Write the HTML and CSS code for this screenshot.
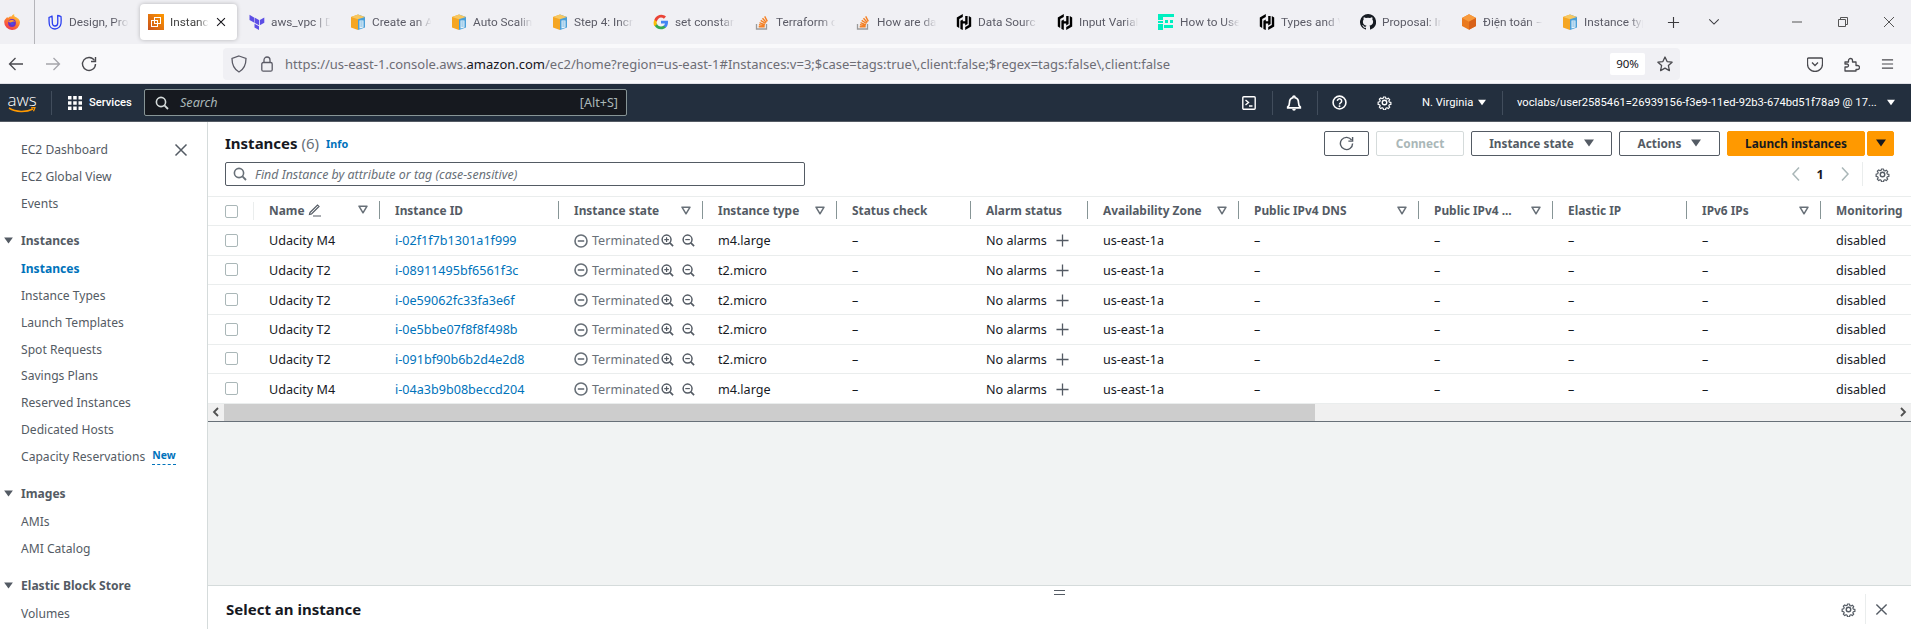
FILE: index.html
```html
<!DOCTYPE html>
<html lang="en">
<head>
<meta charset="utf-8">
<title>Instances | EC2</title>
<link rel="stylesheet" href="styles.css">
</head>
<body>
<svg class="defs" width="0" height="0" aria-hidden="true">
  <defs>
    <linearGradient id="ffg" x1="0.8" y1="0" x2="0.2" y2="1"><stop offset="0" stop-color="#ffd23f"/><stop offset=".5" stop-color="#ff7a2e"/><stop offset="1" stop-color="#f0334f"/></linearGradient>
    <linearGradient id="ecg" x1="0" y1="1" x2="1" y2="0"><stop offset="0" stop-color="#c8511b"/><stop offset="1" stop-color="#ff9900"/></linearGradient>
    <symbol id="i-book" viewBox="0 0 16 16"><path d="M1 3l7-2.500V16l-7-2.500z" fill="#f5a623"/><path d="M8 .5L15 3v10.500L8 16z" fill="#4a9fd8"/><path d="M8 .5L15 3 8 5.200 1 3z" fill="#f7c75f"/><path d="M9.500 6.500h4v7l-4 1z" fill="#e8f3fa"/><path d="M10.300 8h2.400M10.300 10h2.400M10.300 12h2.400" stroke="#4a9fd8" stroke-width=".8"/></symbol>
    <symbol id="i-hashi" viewBox="0 0 16 16"><path d="M6.800 0L.8 3.500v9L3.200 14V5l3.600-2.100zM9.200 2v5.300H6.800V5.400L4.400 6.800V15l2.400 1V9.500h2.400v1.900l2.400-1.400V2zM9.200 16l6-3.500v-9L12.800 2v9l-3.600 2.100z" fill="#000"/></symbol>
    <symbol id="i-so" viewBox="0 0 16 16"><path d="M2.500 10v5h10v-5" fill="none" stroke="#9a9a9a" stroke-width="1.300"/><path d="M4.700 12.800h6M4.900 10.800l5.800.9M5.500 8.600l5.400 2.200M6.700 6.300l4.800 3.200M8.500 4.200l3.800 4.300M10.700 2.400l2.600 5" stroke="#f48024" stroke-width="1.400" fill="none"/></symbol>
    <symbol id="i-gear" viewBox="0 0 16 16"><path d="M6.700 1h2.600l.4 2 1.400.6 1.700-1.100 1.800 1.800-1.100 1.700.6 1.400 2 .4v2.600l-2 .4-.6 1.400 1.100 1.700-1.800 1.800-1.700-1.100-1.400.6-.4 2H6.700l-.4-2-1.400-.6-1.700 1.100-1.800-1.800 1.100-1.700-.6-1.400-2-.4V7.400l2-.4.6-1.400-1.100-1.700 1.800-1.800 1.700 1.100 1.400-.6z" fill="none" stroke="currentColor" stroke-width="1.500" stroke-linejoin="round" transform="translate(1.300 1.300) scale(.84)"/><circle cx="8" cy="8" r="2.400" fill="none" stroke="currentColor" stroke-width="1.500"/></symbol>
    <symbol id="i-caret" viewBox="0 0 10 8"><path d="M0 .5h10L5 7.500z" fill="currentColor"/></symbol>
    <symbol id="i-filter" viewBox="0 0 10 9"><path d="M1 1.200h8L5 7.800z" fill="none" stroke="currentColor" stroke-width="1.500" stroke-linejoin="round"/></symbol>
    <symbol id="i-x" viewBox="0 0 14 14"><path d="M1.500 1.500l11 11M12.500 1.500l-11 11" stroke="currentColor" stroke-width="1.500" fill="none"/></symbol>
    <symbol id="i-search" viewBox="0 0 14 14"><circle cx="6" cy="6" r="4.600" fill="none" stroke="currentColor" stroke-width="1.600"/><path d="M9.400 9.400L13 13" stroke="currentColor" stroke-width="1.800"/></symbol>
    <symbol id="i-term" viewBox="0 0 14 14"><circle cx="7" cy="7" r="6" fill="none" stroke="#687078" stroke-width="1.600"/><path d="M3.800 7h6.400" stroke="#687078" stroke-width="1.600"/></symbol>
    <symbol id="i-zin" viewBox="0 0 14 14"><circle cx="6" cy="6" r="4.800" fill="none" stroke="#545b64" stroke-width="1.600"/><path d="M9.500 9.500L13 13" stroke="#545b64" stroke-width="1.800"/><path d="M3.500 6h5M6 3.500v5" stroke="#545b64" stroke-width="1.300"/></symbol>
    <symbol id="i-zout" viewBox="0 0 14 14"><circle cx="6" cy="6" r="4.800" fill="none" stroke="#545b64" stroke-width="1.600"/><path d="M9.500 9.500L13 13" stroke="#545b64" stroke-width="1.800"/><path d="M3.500 6h5" stroke="#545b64" stroke-width="1.300"/></symbol>
    <symbol id="i-plus" viewBox="0 0 14 14"><path d="M7 .5v13M.5 7h13" stroke="#545b64" stroke-width="1.400"/></symbol>
  </defs>
</svg>

<div class="app">
  <header class="tabs">
    <svg class="ff" viewBox="0 0 16 16"><path d="M2 4.500c.5-.8 1-1.300 1.600-1.600-.1.500 0 .9.300 1.200C5 2.600 6.500 2.300 7.500 2.500 8 1.500 9 .6 10.300 0c-.3 1-.2 1.800.3 2.500 3 1 5.400 3.300 5.400 6A7.800 7.800 0 0 1 8 16 8 8 0 0 1 .2 8c0-1.400.7-2.600 1.800-3.500z" fill="url(#ffg)"/><circle cx="8" cy="9" r="3.900" fill="#6d2fc4"/><path d="M4.200 7.500c1.800-1.800 5.300-2.200 7.300.3-1.700-.8-3.200-.3-4 .6-1.300.3-2.400 0-3.300-.9z" fill="#ff9a2e"/><circle cx="8.300" cy="9.600" r="1.700" fill="#4a4fe0"/></svg>
    <div class="tabsep"></div>
    <div class="tab">
      <svg class="fav" viewBox="0 0 16 16"><path d="M2 3.500c.2 0 1.800-1 3-1.500.3 3.200.2 5.500.4 7.500.2 1.700 1.300 2.500 2.600 2.500s2.500-1 2.700-2.700c.2-2.500 0-5 0-7.800 1.200.3 2.300.6 3.300 1 .3 2.600.2 4.800 0 7-.3 3-3 5.500-6 5.500S2.500 12.800 2.300 10c-.2-2.200-.3-4.500-.3-6.500z" fill="none" stroke="#2b3ff0" stroke-width="1.300" stroke-linejoin="round"/></svg>
      <span class="tab-t">Design, Pro</span>
    </div>
    <div class="tab tab-on">
      <svg class="fav" viewBox="0 0 16 16"><rect width="16" height="16" fill="url(#ecg)"/><rect x="6.500" y="3.500" width="6" height="6" fill="none" stroke="#fff" stroke-width="1"/><rect x="3.500" y="6.500" width="6" height="6" fill="none" stroke="#fff" stroke-width="1"/></svg>
      <span class="tab-t">Instance</span>
      <svg class="tab-x" viewBox="0 0 14 14"><use href="#i-x"/></svg>
    </div>
    <div class="tab">
      <svg class="fav" viewBox="0 0 16 16"><path d="M5.500 3.500l4.500 2.600v5.200L5.500 8.700zM10.800 6.100l4.500-2.600v5.200l-4.500 2.600zM.5.800L5 3.400v5.200L.5 6zM5.500 9.700l4.500 2.600v3.700L5.500 13.400z" fill="#5c4ee5"/></svg>
      <span class="tab-t">aws_vpc | D</span>
    </div>
    <div class="tab"><svg class="fav"><use href="#i-book"/></svg><span class="tab-t">Create an A</span></div>
    <div class="tab"><svg class="fav"><use href="#i-book"/></svg><span class="tab-t">Auto Scalin</span></div>
    <div class="tab"><svg class="fav"><use href="#i-book"/></svg><span class="tab-t">Step 4: Incr</span></div>
    <div class="tab">
      <svg class="fav" viewBox="0 0 16 16"><path d="M15 8.200c0-.6 0-1-.1-1.500H8v2.900h4a3.400 3.400 0 0 1-1.500 2.200v1.800h2.400c1.400-1.300 2.100-3.200 2.100-5.400z" fill="#4285f4"/><path d="M8 15.300c2 0 3.700-.7 4.900-1.800l-2.400-1.800c-.7.400-1.500.7-2.500.7-1.900 0-3.600-1.300-4.200-3H1.400v1.900A7.300 7.300 0 0 0 8 15.300z" fill="#34a853"/><path d="M3.800 10.400a4.400 4.400 0 0 1 0-2.800V5.700H1.400a7.300 7.300 0 0 0 0 6.600z" fill="#fbbc05"/><path d="M8 3.600c1.100 0 2.100.4 2.900 1.100l2.100-2.100A7.300 7.300 0 0 0 1.400 5.700l2.400 1.900c.6-1.800 2.300-4 4.200-4z" fill="#ea4335"/></svg>
      <span class="tab-t">set constar</span>
    </div>
    <div class="tab"><svg class="fav"><use href="#i-so"/></svg><span class="tab-t">Terraform d</span></div>
    <div class="tab"><svg class="fav"><use href="#i-so"/></svg><span class="tab-t">How are da</span></div>
    <div class="tab"><svg class="fav"><use href="#i-hashi"/></svg><span class="tab-t">Data Sourc</span></div>
    <div class="tab"><svg class="fav"><use href="#i-hashi"/></svg><span class="tab-t">Input Varial</span></div>
    <div class="tab">
      <svg class="fav" viewBox="0 0 16 16"><path d="M0 0h16v3H5v3H0zM0 7h5v2H0zM0 10h5v6H0zM7 6h3v3H7zM12 6h3v3h-3zM6 11h9v3H6z" fill="#00efc0"/></svg>
      <span class="tab-t">How to Use</span>
    </div>
    <div class="tab"><svg class="fav"><use href="#i-hashi"/></svg><span class="tab-t">Types and V</span></div>
    <div class="tab">
      <svg class="fav" viewBox="0 0 16 16"><path d="M8 0a8 8 0 0 0-2.500 15.600c.4.100.5-.2.500-.4v-1.400c-2.200.5-2.700-1-2.700-1-.4-.9-.9-1.200-.9-1.200-.7-.5.100-.5.100-.5.800.1 1.200.8 1.200.8.700 1.200 1.900.9 2.300.7.100-.5.300-.9.500-1.100-1.800-.2-3.600-.9-3.600-4 0-.9.300-1.600.8-2.100-.1-.2-.4-1 .1-2.100 0 0 .7-.2 2.200.8a7.600 7.600 0 0 1 4 0c1.500-1 2.200-.8 2.200-.8.500 1.100.2 1.900.1 2.100.5.600.8 1.300.8 2.100 0 3.100-1.900 3.800-3.700 4 .3.300.6.800.6 1.500v2.200c0 .2.100.5.600.4A8 8 0 0 0 8 0z" fill="#161b22"/></svg>
      <span class="tab-t">Proposal: Ir</span>
    </div>
    <div class="tab">
      <svg class="fav" viewBox="0 0 16 16"><path d="M8 .3l7 3.700v8l-7 3.700L1 12V4z" fill="#ea7a1f"/><path d="M8 .3l7 3.700-7 3.800L1 4z" fill="#f89a3c"/><path d="M8 7.800l7-3.800v8l-7 3.700z" fill="#d8621a"/></svg>
      <span class="tab-t">Điện toán –</span>
    </div>
    <div class="tab"><svg class="fav"><use href="#i-book"/></svg><span class="tab-t">Instance typ</span></div>
    <svg class="t-plus" viewBox="0 0 14 14"><path d="M7 1v12M1 7h12" stroke="#3a3a3e" stroke-width="1.200"/></svg>
    <svg class="t-chev" viewBox="0 0 14 8"><path d="M1.500 1L7 6.500 12.500 1" fill="none" stroke="#3a3a3e" stroke-width="1.200"/></svg>
    <div class="winctl">
      <svg class="wc" viewBox="0 0 12 12"><path d="M1 6h10" stroke="#555" stroke-width="1"/></svg>
      <svg class="wc" viewBox="0 0 12 12"><path d="M1.500 3.500h7v7h-7zM3.500 3.500v-2h7v7h-2" fill="none" stroke="#555" stroke-width="1"/></svg>
      <svg class="wc" viewBox="0 0 12 12"><path d="M1 1l10 10M11 1L1 11" stroke="#555" stroke-width="1"/></svg>
    </div>
  </header>

  <div class="toolbar">
    <svg class="nav-ic" viewBox="0 0 16 16"><path d="M15 8H1.500M7.500 2l-6 6 6 6" fill="none" stroke="#4a4a4f" stroke-width="1.300"/></svg>
    <svg class="nav-ic nav-dim" viewBox="0 0 16 16"><path d="M1 8h13.500M8.500 2l6 6-6 6" fill="none" stroke="#a5a5ab" stroke-width="1.300"/></svg>
    <svg class="nav-ic" viewBox="0 0 16 16"><path d="M13.500 4.500A6.500 6.500 0 1 0 14.500 8" fill="none" stroke="#4a4a4f" stroke-width="1.400"/><path d="M14.500 1v4.500H10" fill="none" stroke="#4a4a4f" stroke-width="1.400"/></svg>
    <div class="urlbar">
      <svg class="u-shield" viewBox="0 0 16 18"><path d="M8 1l7 2.500c0 6-1.500 10.500-7 13.500C2.500 14 1 9.500 1 3.500z" fill="none" stroke="#5b5b66" stroke-width="1.300"/></svg>
      <svg class="u-lock" viewBox="0 0 12 16"><rect x=".8" y="6.500" width="10.400" height="8.700" rx="1.500" fill="none" stroke="#5b5b66" stroke-width="1.300"/><path d="M3 6.500V4a3 3 0 0 1 6 0v2.500" fill="none" stroke="#5b5b66" stroke-width="1.300"/></svg>
      <span class="url">https://us-east-1.console.aws.<b>amazon.com</b>/ec2/home?region=us-east-1#Instances:v=3;$case=tags:true\,client:false;$regex=tags:false\,client:false</span>
      <span class="zoomlvl">90%</span>
      <svg class="u-star" viewBox="0 0 16 16"><path d="M8 1l2.100 4.600 5 .6-3.700 3.400 1 5L8 12.100l-4.400 2.500 1-5L.9 6.200l5-.6z" fill="none" stroke="#4a4a4f" stroke-width="1.300" stroke-linejoin="round"/></svg>
    </div>
    <svg class="tb-r tb-pocket" viewBox="0 0 16 16"><path d="M1.500 2h13a1 1 0 0 1 1 1v5a7.500 7.500 0 0 1-15 0V3a1 1 0 0 1 1-1z" fill="none" stroke="#4a4a4f" stroke-width="1.300"/><path d="M5 6.500L8 9.500l3-3" fill="none" stroke="#4a4a4f" stroke-width="1.300"/></svg>
    <svg class="tb-r tb-ext" viewBox="0 0 16 16"><path d="M1 6h3.500V4.500a2 2 0 0 1 4 0V6H12v3.500h1.500a2 2 0 0 1 0 4H12V15H1v-4h2a1.500 1.500 0 0 0 0-3H1z" fill="none" stroke="#4a4a4f" stroke-width="1.300" stroke-linejoin="round"/></svg>
    <svg class="tb-r tb-menu" viewBox="0 0 14 12"><path d="M1 1.500h12M1 6h12M1 10.500h12" stroke="#4a4a4f" stroke-width="1.200"/></svg>
  </div>

  <nav class="awsnav">
    <div class="logo"><span class="logo-t">aws</span><svg class="smile" viewBox="0 0 28 6"><path d="M1 1c7 4.500 17 4.500 24 1" fill="none" stroke="#f90" stroke-width="1.500"/><path d="M23 .8l4-.3-1.500 3.700" fill="none" stroke="#f90" stroke-width="1.200"/></svg></div>
    <div class="vsep vsep-logo"></div>
    <svg class="grid9" viewBox="0 0 14 14"><path d="M0 0h3.500v3.500H0zM5.200 0h3.500v3.500H5.200zM10.500 0H14v3.500h-3.500zM0 5.200h3.500v3.500H0zM5.200 5.200h3.500v3.500H5.200zM10.500 5.200H14v3.500h-3.500zM0 10.500h3.500V14H0zM5.200 10.500h3.500V14H5.200zM10.500 10.500H14V14h-3.500z" fill="#fff"/></svg>
    <span class="services">Services</span>
    <div class="awssearch">
      <svg class="as-ic"><use href="#i-search"/></svg>
      <span class="as-t">Search</span>
      <span class="as-k">[Alt+S]</span>
    </div>
    <svg class="n-shell" viewBox="0 0 14 14"><rect x=".8" y=".8" width="12.400" height="12.400" rx="1" fill="none" stroke="#fff" stroke-width="1.400"/><path d="M3.500 4l3 2.500-3 2.500M7 10h3.500" fill="none" stroke="#fff" stroke-width="1.400"/></svg>
    <div class="vsep vsep-a"></div>
    <svg class="n-bell" viewBox="0 0 16 16"><path d="M8 1a1 1 0 0 1 1 1v.600c2.300.5 3.500 2.400 3.500 4.900 0 2.500.5 3.500 1.800 4.500v.8H1.700V12c1.300-1 1.800-2 1.800-4.500 0-2.500 1.200-4.400 3.500-4.900V2a1 1 0 0 1 1-1z" fill="none" stroke="#fff" stroke-width="1.700"/><path d="M6.200 14h3.600a1.800 1.800 0 0 1-3.600 0z" fill="#fff"/></svg>
    <div class="vsep vsep-b"></div>
    <svg class="n-help" viewBox="0 0 14 14"><circle cx="7" cy="7" r="6" fill="none" stroke="#fff" stroke-width="1.500"/><path d="M5 5.500a2 2 0 1 1 3 1.800c-.7.400-1 .8-1 1.500" fill="none" stroke="#fff" stroke-width="1.400"/><circle cx="7" cy="10.500" r=".9" fill="#fff"/></svg>
    <svg class="n-gear"><use href="#i-gear"/></svg>
    <span class="region">N. Virginia</span>
    <svg class="n-caret"><use href="#i-caret"/></svg>
    <div class="vsep vsep-c"></div>
    <span class="account">voclabs/user2585461=26939156-f3e9-11ed-92b3-674bd51f78a9 @ 17...</span>
    <svg class="n-caret n-caret-end"><use href="#i-caret"/></svg>
  </nav>

  <div class="body">
    <aside class="side">
      <svg class="side-x"><use href="#i-x"/></svg>
      <a class="si">EC2 Dashboard</a>
      <a class="si">EC2 Global View</a>
      <a class="si">Events</a>
      <div class="sh"><svg class="sh-c"><use href="#i-caret"/></svg>Instances</div>
      <a class="si si-on">Instances</a>
      <a class="si">Instance Types</a>
      <a class="si">Launch Templates</a>
      <a class="si">Spot Requests</a>
      <a class="si">Savings Plans</a>
      <a class="si">Reserved Instances</a>
      <a class="si">Dedicated Hosts</a>
      <a class="si">Capacity Reservations <span class="new">New</span></a>
      <div class="sh"><svg class="sh-c"><use href="#i-caret"/></svg>Images</div>
      <a class="si">AMIs</a>
      <a class="si">AMI Catalog</a>
      <div class="sh"><svg class="sh-c"><use href="#i-caret"/></svg>Elastic Block Store</div>
      <a class="si">Volumes</a>
    </aside>

    <main class="main">
      <section class="top">
        <div class="top-l">
          <h1 class="title">Instances <span class="count">(6)</span> <a class="info">Info</a></h1>
          <div class="find">
            <svg class="find-ic"><use href="#i-search"/></svg>
            <span>Find Instance by attribute or tag (case-sensitive)</span>
          </div>
        </div>
        <div class="top-r">
          <div class="btns">
            <button class="btn btn-ref"><svg viewBox="0 0 16 16"><path d="M13.500 4.500A6.500 6.500 0 1 0 14.500 8" fill="none" stroke="#545b64" stroke-width="1.500"/><path d="M14.500 1v4.500H10" fill="none" stroke="#545b64" stroke-width="1.500"/></svg></button>
            <button class="btn btn-off">Connect</button>
            <button class="btn btn-state">Instance state <svg><use href="#i-caret"/></svg></button>
            <button class="btn btn-act">Actions <svg><use href="#i-caret"/></svg></button>
            <button class="btn btn-launch">Launch instances</button>
            <button class="btn btn-drop"><svg><use href="#i-caret"/></svg></button>
          </div>
          <div class="pager">
            <svg class="pg-ch" viewBox="0 0 10 16"><path d="M8 1.500L2 8l6 6.500" fill="none" stroke="#aab7b8" stroke-width="1.500"/></svg>
            <span class="pg-n">1</span>
            <svg class="pg-ch" viewBox="0 0 10 16"><path d="M2 1.500L8 8l-6 6.500" fill="none" stroke="#aab7b8" stroke-width="1.500"/></svg>
            <span class="pg-sep"></span>
            <svg class="pg-gear"><use href="#i-gear"/></svg>
          </div>
        </div>
      </section>

      <section class="table">
        <div class="row row-h">
          <div class="chk"><span class="cb"></span><span class="sep sep-faint"></span></div>
          <div class="th th-name">Name <svg class="pencil" viewBox="0 0 14 14"><path d="M2 9.500L9.500 2l1.500 1.500L3.500 11l-2 .5zM5 13h8" fill="none" stroke="#545b64" stroke-width="1.200"/></svg><svg class="flt"><use href="#i-filter"/></svg><span class="sep"></span></div>
          <div class="th">Instance ID<span class="sep sep-auto"></span></div>
          <div class="th">Instance state<svg class="flt"><use href="#i-filter"/></svg><span class="sep"></span></div>
          <div class="th">Instance type<svg class="flt"><use href="#i-filter"/></svg><span class="sep"></span></div>
          <div class="th">Status check<span class="sep sep-auto"></span></div>
          <div class="th">Alarm status<span class="sep sep-auto"></span></div>
          <div class="th">Availability Zone<svg class="flt"><use href="#i-filter"/></svg><span class="sep"></span></div>
          <div class="th">Public IPv4 DNS<svg class="flt"><use href="#i-filter"/></svg><span class="sep"></span></div>
          <div class="th">Public IPv4 ...<svg class="flt"><use href="#i-filter"/></svg><span class="sep"></span></div>
          <div class="th">Elastic IP<span class="sep sep-auto"></span></div>
          <div class="th">IPv6 IPs<svg class="flt"><use href="#i-filter"/></svg><span class="sep"></span></div>
          <div class="th">Monitoring</div>
        </div>

        <div class="row">
          <div class="chk"><span class="cb"></span></div><div class="td">Udacity M4</div><div class="td"><a class="lnk">i-02f1f7b1301a1f999</a></div>
          <div class="td"><svg class="st"><use href="#i-term"/></svg><span class="stt">Terminated</span><svg class="zi"><use href="#i-zin"/></svg><svg class="zi"><use href="#i-zout"/></svg></div>
          <div class="td">m4.large</div><div class="td">–</div><div class="td">No alarms<svg class="pl"><use href="#i-plus"/></svg></div><div class="td">us-east-1a</div><div class="td">–</div><div class="td">–</div><div class="td">–</div><div class="td">–</div><div class="td">disabled</div>
        </div>
        <div class="row">
          <div class="chk"><span class="cb"></span></div><div class="td">Udacity T2</div><div class="td"><a class="lnk">i-08911495bf6561f3c</a></div>
          <div class="td"><svg class="st"><use href="#i-term"/></svg><span class="stt">Terminated</span><svg class="zi"><use href="#i-zin"/></svg><svg class="zi"><use href="#i-zout"/></svg></div>
          <div class="td">t2.micro</div><div class="td">–</div><div class="td">No alarms<svg class="pl"><use href="#i-plus"/></svg></div><div class="td">us-east-1a</div><div class="td">–</div><div class="td">–</div><div class="td">–</div><div class="td">–</div><div class="td">disabled</div>
        </div>
        <div class="row">
          <div class="chk"><span class="cb"></span></div><div class="td">Udacity T2</div><div class="td"><a class="lnk">i-0e59062fc33fa3e6f</a></div>
          <div class="td"><svg class="st"><use href="#i-term"/></svg><span class="stt">Terminated</span><svg class="zi"><use href="#i-zin"/></svg><svg class="zi"><use href="#i-zout"/></svg></div>
          <div class="td">t2.micro</div><div class="td">–</div><div class="td">No alarms<svg class="pl"><use href="#i-plus"/></svg></div><div class="td">us-east-1a</div><div class="td">–</div><div class="td">–</div><div class="td">–</div><div class="td">–</div><div class="td">disabled</div>
        </div>
        <div class="row">
          <div class="chk"><span class="cb"></span></div><div class="td">Udacity T2</div><div class="td"><a class="lnk">i-0e5bbe07f8f8f498b</a></div>
          <div class="td"><svg class="st"><use href="#i-term"/></svg><span class="stt">Terminated</span><svg class="zi"><use href="#i-zin"/></svg><svg class="zi"><use href="#i-zout"/></svg></div>
          <div class="td">t2.micro</div><div class="td">–</div><div class="td">No alarms<svg class="pl"><use href="#i-plus"/></svg></div><div class="td">us-east-1a</div><div class="td">–</div><div class="td">–</div><div class="td">–</div><div class="td">–</div><div class="td">disabled</div>
        </div>
        <div class="row">
          <div class="chk"><span class="cb"></span></div><div class="td">Udacity T2</div><div class="td"><a class="lnk">i-091bf90b6b2d4e2d8</a></div>
          <div class="td"><svg class="st"><use href="#i-term"/></svg><span class="stt">Terminated</span><svg class="zi"><use href="#i-zin"/></svg><svg class="zi"><use href="#i-zout"/></svg></div>
          <div class="td">t2.micro</div><div class="td">–</div><div class="td">No alarms<svg class="pl"><use href="#i-plus"/></svg></div><div class="td">us-east-1a</div><div class="td">–</div><div class="td">–</div><div class="td">–</div><div class="td">–</div><div class="td">disabled</div>
        </div>
        <div class="row">
          <div class="chk"><span class="cb"></span></div><div class="td">Udacity M4</div><div class="td"><a class="lnk">i-04a3b9b08beccd204</a></div>
          <div class="td"><svg class="st"><use href="#i-term"/></svg><span class="stt">Terminated</span><svg class="zi"><use href="#i-zin"/></svg><svg class="zi"><use href="#i-zout"/></svg></div>
          <div class="td">m4.large</div><div class="td">–</div><div class="td">No alarms<svg class="pl"><use href="#i-plus"/></svg></div><div class="td">us-east-1a</div><div class="td">–</div><div class="td">–</div><div class="td">–</div><div class="td">–</div><div class="td">disabled</div>
        </div>
      </section>

      <div class="hscroll">
        <span class="hs-btn"><svg viewBox="0 0 8 10"><path d="M6 1L2 5l4 4" fill="none" stroke="#505050" stroke-width="1.800"/></svg></span>
        <span class="hs-thumb"></span>
        <span class="hs-btn hs-end"><svg viewBox="0 0 8 10"><path d="M2 1l4 4-4 4" fill="none" stroke="#505050" stroke-width="1.800"/></svg></span>
      </div>

      <div class="gap"></div>

      <section class="detail">
        <span class="detail-t">Select an instance</span>
        <span class="handle"></span>
        <svg class="d-gear"><use href="#i-gear"/></svg>
        <span class="d-sep"></span>
        <svg class="d-x"><use href="#i-x"/></svg>
      </section>
    </main>
  </div>
</div>
</body>
</html>
```

FILE: styles.css
```css
* { box-sizing: border-box; }
html, body { margin: 0; height: 100%; overflow: hidden; }
body { font-family: "Noto Sans", "Open Sans", sans-serif; font-size: 12.6px; color: #16191f; background: #fff; }
.defs { position: absolute; }
a { text-decoration: none; }
button { font: inherit; }
svg { display: block; flex: none; }

.app { width: 1911px; height: 629px; display: flex; flex-direction: column; overflow: hidden; }

/* browser tab strip */
.tabs { height: 44px; flex: none; background: #f0f0f4; display: flex; align-items: center; }
.ff { width: 16px; height: 16px; margin-left: 4px; }
.tabsep { width: 1px; height: 44px; background: #b5b5ba; margin-left: 14px; margin-right: 4px; }
.tab { width: 101px; height: 36px; flex: none; display: flex; align-items: center; padding-left: 8px; gap: 6px; border-radius: 4px; color: #5b5b66; font-family: Roboto, "Noto Sans", sans-serif; font-size: 11.8px; }
.fav { width: 16px; height: 16px; }
.tab-t { width: 62px; white-space: nowrap; -webkit-mask-image: linear-gradient(90deg, #000 72%, transparent 96%); mask-image: linear-gradient(90deg, #000 72%, transparent 96%); }
.tab-on { width: 97px; margin-right: 4px; background: #fff; box-shadow: 0 0 4px rgba(0,0,0,.25); color: #444; }
.tab-on .tab-t { width: 40px; }
.tab-x { width: 10px; height: 10px; color: #15141a; }
.t-plus { width: 13px; height: 13px; margin-left: 12px; }
.t-chev { width: 12px; height: 8px; margin-left: 28px; }
.winctl { margin-left: 71px; display: flex; gap: 34px; }
.wc { width: 12px; height: 12px; }

/* browser toolbar */
.toolbar { height: 40px; flex: none; background: #f9f9fb; display: flex; align-items: center; border-bottom: 1px solid #e0e0e6; }
.nav-ic { width: 16px; height: 16px; margin-left: 8px; margin-right: 13px; }
.nav-dim { margin-left: 8px; }
.nav-ic:first-child { margin-left: 8px; }
.nav-ic:nth-child(3) { margin-left: 7px; margin-right: 0; }
.urlbar { width: 1457px; height: 32px; margin-left: 126px; background: #f0f0f4; border-radius: 4px; display: flex; align-items: center; padding-left: 8px; }
.u-shield { width: 16px; height: 18px; }
.u-lock { width: 12px; height: 16px; margin-left: 14px; }
.url { margin-left: 12px; font-size: 13px; color: #6d6d75; white-space: nowrap; width: 1048px; }
.url b { font-weight: 400; color: #15141a; }
.zoomlvl { margin-left: 277px; width: 35px; height: 22px; background: #fff; border-radius: 2px; display: flex; align-items: center; justify-content: center; font-size: 11.5px; color: #15141a; }
.u-star { width: 16px; height: 16px; margin-left: 12px; }
.tb-r { height: 16px; width: 16px; }
.tb-pocket { margin-left: 127px; }
.tb-ext { margin-left: 21px; }
.tb-menu { margin-left: 21px; width: 13px; height: 12px; }

/* aws nav */
.awsnav { height: 38px; flex: none; background: #232f3e; border-bottom: 1px solid #545b64; color: #fff; display: flex; align-items: center; font-family: Roboto, "Noto Sans", sans-serif; font-size: 11.2px; }
.logo { width: 28px; margin-left: 8px; display: flex; flex-direction: column; align-items: center; }
.logo-t { font-family: "Open Sans", sans-serif; font-size: 17px; line-height: 14px; color: #fff; font-weight: 300; }
.smile { width: 28px; height: 6px; }
.vsep { width: 1px; height: 24px; background: #414d5c; }
.vsep-logo { margin-left: 15px; }
.grid9 { width: 14px; height: 14px; margin-left: 16px; }
.services { margin-left: 7px; font-weight: 500; width: 55px; }
.awssearch { width: 483px; height: 27px; background: #16191f; border: 1px solid #879596; border-radius: 2px; display: flex; align-items: center; padding: 0 8px 0 10px; font-family: "Noto Sans", sans-serif; }
.as-ic { width: 14px; height: 14px; color: #d5dbdb; margin-left: 0; }
.as-t { margin-left: 11px; font-style: italic; color: #aab7b8; font-size: 12.6px; }
.as-k { margin-left: auto; color: #aab7b8; font-size: 12.6px; }
.n-shell { width: 14px; height: 14px; margin-left: 615px; }
.vsep-a { margin-left: 16px; }
.n-bell { width: 16px; height: 16px; margin-left: 13px; }
.vsep-b { margin-left: 15px; }
.n-help { width: 15px; height: 15px; margin-left: 14px; }
.n-gear { width: 15px; height: 15px; margin-left: 30px; color: #fff; }
.region { margin-left: 30px; width: 51px; white-space: nowrap; }
.n-caret { width: 8px; height: 7px; margin-left: 5px; color: #fff; }
.vsep-c { margin-left: 16px; }
.account { margin-left: 14px; width: 366px; white-space: nowrap; }
.n-caret-end { margin-left: 4px; }

.body { flex: 1; display: flex; min-height: 0; }

/* sidebar */
.side { width: 208px; flex: none; background: #fff; border-right: 1px solid #d5dbdb; padding: 14px 0 0 21px; display: flex; flex-direction: column; position: relative; overflow: hidden; color: #545b64; font-size: 12.1px; }
.si { height: 26.9px; flex: none; display: flex; align-items: center; color: #545b64; white-space: nowrap; }
.si-on { color: #0073bb; font-weight: 700; }
.sh { height: 27px; flex: none; margin: 10.300px 0 1px -17px; display: flex; align-items: center; font-weight: 700; color: #545b64; white-space: nowrap; }
.sh-c { width: 9px; height: 7px; margin-right: 8px; color: #545b64; }
.side-x { position: absolute; top: 21px; left: 174px; width: 14px; height: 14px; color: #545b64; }
.new { color: #0073bb; font-weight: 700; font-size: 10.4px; margin-left: 7px; border-bottom: 1px dashed #0073bb; padding-bottom: 2px; }

/* main */
.main { flex: 1; min-width: 0; display: flex; flex-direction: column; background: #f1f3f3; }
.top { background: #fff; padding: 9px 17px 10px 17px; display: flex; justify-content: space-between; flex: none; }
.top-l { display: flex; flex-direction: column; gap: 6px; }
.title { margin: 0; height: 25px; padding-bottom: 2px; display: flex; align-items: center; font-size: 15px; font-weight: 700; color: #16191f; white-space: pre; }
.count { font-weight: 400; color: #687078; }
.info { color: #0073bb; font-size: 10.8px; font-weight: 700; margin-left: 7px; padding-top: 2px; }
.find { width: 580px; height: 24px; border: 1px solid #545b64; border-radius: 2px; display: flex; align-items: center; padding-left: 7px; font-style: italic; font-size: 12.4px; color: #687078; }
.find-ic { width: 14px; height: 14px; margin-right: 8px; color: #687078; }
.top-r { display: flex; flex-direction: column; gap: 6px; align-items: flex-end; }
.btns { display: flex; gap: 7px; height: 25px; }
.btn { height: 25px; border: 1px solid #545b64; border-radius: 2px; background: #fff; color: #545b64; font-size: 11.8px; font-weight: 700; display: flex; align-items: center; justify-content: center; padding: 0 0 2px; }
.btn svg { width: 10px; height: 8px; margin-left: 10px; }
.btn-ref { width: 45px; padding: 0; }
.btn-ref svg { width: 15px; height: 15px; margin: 0; }
.btn-off { width: 88px; border-color: #d5dbdb; color: #aab7b8; }
.btn-state { width: 141px; }
.btn-act { width: 101px; }
.btn-launch { width: 138px; background: #ff9900; border-color: #ff9900; color: #16191f; }
.btn-drop { width: 27px; margin-left: -5px; background: #ff9900; border-color: #ff9900; color: #16191f; }
.btn-drop svg { margin: 0; }
.pager { height: 24px; display: flex; align-items: center; padding-right: 4.500px; }
.pg-ch { width: 10px; height: 16px; }
.pg-n { width: 39px; text-align: center; font-weight: 700; color: #16191f; }
.pg-sep { width: 1px; height: 24px; background: #eaeded; margin: 0 12px; }
.pg-gear { width: 15px; height: 15px; color: #545b64; }

/* table */
.table { flex: none; background: #fff; overflow: hidden; border-top: 1px solid #eaeded; }
.row { display: grid; grid-template-columns: 46px 126px 179px 144px 134px 134px 117px 151px 180px 134px 134px 134px 120px; width: 1733px; height: 29.67px; border-bottom: 1px solid #eaeded; align-items: center; white-space: nowrap; }
.row-h { height: 29px; font-weight: 700; font-size: 11.9px; color: #545b64; }
.chk { display: flex; align-items: center; justify-content: space-between; padding-left: 17px; }
.cb { width: 13px; height: 13px; border: 1px solid #aab7b8; border-radius: 2px; background: #fff; }
.th, .td { display: flex; align-items: center; padding-left: 15px; height: 100%; overflow: hidden; }
.th { padding-bottom: 2px; }
.td { color: #16191f; padding-top: 1px; }
.th-name { padding-bottom: 3px; }
.pencil { width: 14px; height: 14px; margin-left: 4px; }
.flt { width: 10px; height: 9px; margin-left: auto; margin-right: 11px; color: #687078; }
.sep { width: 1px; height: 18px; background: #879596; flex: none; }
.sep-auto { margin-left: auto; }
.sep-faint { height: 18px; background: #eaeded; }
.lnk { color: #0073bb; }
.st { width: 14px; height: 14px; margin-right: 4px; }
.stt { color: #687078; width: 71px; }
.zi { width: 13px; height: 13px; margin-right: 8px; }
.pl { width: 13px; height: 13px; margin-left: 9.500px; }

/* scrollbar */
.hscroll { height: 18px; flex: none; display: flex; background: #f0f0f0; border-bottom: 1px solid #687078; }
.hs-btn { width: 16px; display: flex; align-items: center; justify-content: center; }
.hs-btn svg { width: 8px; height: 10px; }
.hs-thumb { width: 1091px; background: #cdcdcd; }
.hs-end { margin-left: auto; }

.gap { flex: 1; }

/* split panel */
.detail { height: 44px; flex: none; background: #fff; border-top: 1px solid #d5dbdb; display: flex; align-items: center; padding: 3px 0 0 18px; position: relative; }
.detail-t { font-size: 15px; font-weight: 700; color: #16191f; }
.handle { position: absolute; left: 846px; top: 4px; width: 11px; height: 5px; border-top: 1px solid #545b64; border-bottom: 1px solid #545b64; }
.d-gear { width: 15px; height: 15px; margin-left: auto; color: #545b64; }
.d-sep { width: 1px; height: 30px; background: #eaeded; margin: 0 9px; }
.d-x { width: 13px; height: 13px; margin-right: 23px; color: #545b64; }
```
